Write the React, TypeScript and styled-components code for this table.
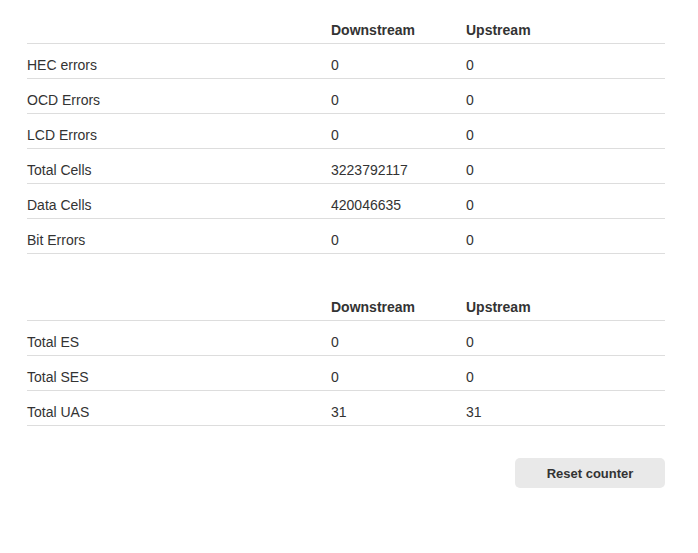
import React from "react";
import styled, { createGlobalStyle } from "styled-components";

const Global = createGlobalStyle`
  html, body { margin: 0; padding: 0; background: #fff; }
  body { font-family: "Liberation Sans", Arial, sans-serif; color: #333; }
`;

const Page = styled.div`
  padding: 9px 33px 40px 27px;
  display: flex;
  flex-direction: column;
  gap: 32px;
`;

const Table = styled.div`
  display: flex;
  flex-direction: column;
`;

const Row = styled.div`
  display: grid;
  grid-template-columns: 304px 135px 1fr;
  border-bottom: 1px solid #dddddd;
`;

const Cell = styled.div<{ $head?: boolean }>`
  font-size: 14px;
  line-height: 20px;
  padding: 11px 0 3px 0;
  font-weight: ${(p) => (p.$head ? 700 : 400)};
  color: #333;
  white-space: nowrap;
`;

const Actions = styled.div`
  display: flex;
  justify-content: flex-end;
`;

const Button = styled.button`
  width: 150px;
  height: 30px;
  border: none;
  border-radius: 5px;
  background: #e9e9e9;
  color: #333;
  font-family: "Liberation Sans", Arial, sans-serif;
  font-size: 13px;
  font-weight: 700;
  cursor: pointer;
  padding: 0;
`;

type Data = [string, string, string][];

const atm: Data = [
  ["HEC errors", "0", "0"],
  ["OCD Errors", "0", "0"],
  ["LCD Errors", "0", "0"],
  ["Total Cells", "3223792117", "0"],
  ["Data Cells", "420046635", "0"],
  ["Bit Errors", "0", "0"],
];

const totals: Data = [
  ["Total ES", "0", "0"],
  ["Total SES", "0", "0"],
  ["Total UAS", "31", "31"],
];

function StatsTable({ rows }: { rows: Data }) {
  return (
    <Table>
      <Row>
        <Cell $head></Cell>
        <Cell $head>Downstream</Cell>
        <Cell $head>Upstream</Cell>
      </Row>
      {rows.map(([l, d, u]) => (
        <Row key={l}>
          <Cell>{l}</Cell>
          <Cell>{d}</Cell>
          <Cell>{u}</Cell>
        </Row>
      ))}
    </Table>
  );
}

export default function App() {
  return (
    <>
      <Global />
      <Page>
        <StatsTable rows={atm} />
        <StatsTable rows={totals} />
        <Actions>
          <Button>Reset counter</Button>
        </Actions>
      </Page>
    </>
  );
}
